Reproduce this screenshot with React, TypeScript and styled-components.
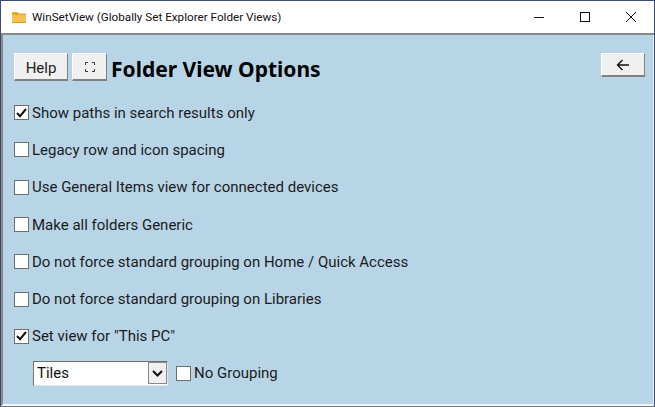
import React from "react";
import styled, { createGlobalStyle } from "styled-components";

const Global = createGlobalStyle`
  html, body { margin: 0; padding: 0; background: #fff; }
  body { font-family: Roboto, "Noto Sans", sans-serif; }
`;
const Win = styled.div`
  width: 655px; height: 407px; box-sizing: border-box; display: flex; flex-direction: column;
  border: 1px solid #3c4a70; border-bottom-color: #7a7a7a; overflow: hidden; background: #fff;
`;
const TitleBar = styled.div`
  height: 32px; flex: none; display: flex; align-items: center; padding-left: 11px;
  background: #fff; border-bottom: 2px solid #8a8a8a;
`;
const Title = styled.span`
  font-size: 11.7px; color: #111; margin-left: 6px; flex: 1; white-space: nowrap;
`;
const WinBtn = styled.div`
  width: 46px; height: 32px; display: flex; align-items: center; justify-content: center;
`;
const Content = styled.div`
  flex: 1; min-height: 0; box-sizing: border-box; background: #b8d5e8;
  border-left: 2px solid #8a8a8a; border-right: 1px solid #f2f6f8; border-bottom: 2px solid #f2f6f8;
  padding: 18px 8px 0 11px; display: flex; flex-direction: column;
`;
const Header = styled.div`
  display: flex; align-items: flex-start; height: 28px; margin-bottom: 13px;
`;
const Btn = styled.button<{ $w: number; $h: number }>`
  width: ${p => p.$w}px; height: ${p => p.$h}px; box-sizing: border-box; padding: 0; margin: 0;
  display: flex; align-items: center; justify-content: center;
  background: #f0f0f0; color: #222; font-family: inherit; font-size: 15px;
  border: none; border-right: 1px solid #808080; border-bottom: 2px solid #808080;
  border-top: 1px solid #fff; border-left: 1px solid #fff;
`;
const HelpBtn = styled(Btn)` margin-right: 4px; padding-top: 2px; `;
const Heading = styled.h1`
  margin: 0 0 0 4px; height: 28px; line-height: 32px; font-size: 21px; font-weight: 700; color: #000; flex: 1; white-space: nowrap; font-family: "Noto Sans", sans-serif;
`;
const Row = styled.label`
  display: flex; align-items: center; height: 37.3px; font-size: 15px; color: #1b1b1b; white-space: nowrap;
`;
const Box = styled.span`
  width: 15px; height: 15px; box-sizing: border-box; flex: none; margin-right: 3px;
  display: flex; align-items: center; justify-content: center;
  background: #fff; border: 1px solid #6e6e6e;
`;
const SubRow = styled.div`
  display: flex; align-items: center; margin-left: 19px; height: 30px; margin-top: 3px;
`;
const SelectBox = styled.div`
  width: 135px; height: 25px; box-sizing: border-box; display: flex; background: #fff;
  border: 1px solid; border-color: #707070 #e4e4e4 #e4e4e4 #707070;
  font-size: 15px; color: #111; align-items: center; padding-left: 3px; justify-content: space-between;
`;
const Arrow = styled.span`
  width: 19px; height: 22px; box-sizing: border-box; display: flex; align-items: center; justify-content: center;
  background: #f0f0f0; border: 1px solid #8a8a8a;
`;
const NoGroup = styled.label`
  display: flex; align-items: center; font-size: 15px; color: #1b1b1b; margin-left: 8px;
`;

const Check = () => (
  <svg width="11" height="10" viewBox="0 0 11 10"><path d="M1 5l3 3.2L10 1" fill="none" stroke="#111" strokeWidth="2" /></svg>
);

const CheckRow = ({ on, children }: { on?: boolean; children: React.ReactNode }) => (
  <Row><Box>{on && <Check />}</Box>{children}</Row>
);

export default function App() {
  return (
    <Win>
      <Global />
      <TitleBar>
        <svg width="14" height="11" viewBox="0 0 14 11">
          <path d="M0 0h5.5l1.5 1.5H14V11H0z" fill="#e8a92e" />
          <path d="M0 3h14v8H0z" fill="#f5c24f" />
          <path d="M0 10h14v1H0z" fill="#d99a25" />
        </svg>
        <Title>WinSetView (Globally Set Explorer Folder Views)</Title>
        <WinBtn><svg width="10" height="10"><path d="M0 5.5h10" stroke="#111" /></svg></WinBtn>
        <WinBtn><svg width="10" height="10"><rect x=".5" y=".5" width="9" height="9" fill="none" stroke="#111" /></svg></WinBtn>
        <WinBtn><svg width="10" height="10"><path d="M0 0l10 10M10 0L0 10" stroke="#111" /></svg></WinBtn>
      </TitleBar>
      <Content>
        <Header>
          <HelpBtn $w={54} $h={28}>Help</HelpBtn>
          <Btn $w={35} $h={28}>
            <svg width="10" height="10" viewBox="0 0 10 10">
              <path d="M.5 3V.5H3M7 .5h2.5V3M9.5 7v2.5H7M3 9.5H.5V7" fill="none" stroke="#333" />
            </svg>
          </Btn>
          <Heading>Folder View Options</Heading>
          <Btn $w={44} $h={24}>
            <svg width="14" height="12" viewBox="0 0 14 12"><path d="M13 6H1.5M6.5 1L1.5 6l5 5" fill="none" stroke="#111" strokeWidth="1.4" /></svg>
          </Btn>
        </Header>
        <CheckRow on>Show paths in search results only</CheckRow>
        <CheckRow>Legacy row and icon spacing</CheckRow>
        <CheckRow>Use General Items view for connected devices</CheckRow>
        <CheckRow>Make all folders Generic</CheckRow>
        <CheckRow>Do not force standard grouping on Home / Quick Access</CheckRow>
        <CheckRow>Do not force standard grouping on Libraries</CheckRow>
        <CheckRow on>Set view for "This PC"</CheckRow>
        <SubRow>
          <SelectBox>Tiles
            <Arrow><svg width="11" height="7" viewBox="0 0 11 7"><path d="M1 1l4.5 4.5L10 1" fill="none" stroke="#111" strokeWidth="2" /></svg></Arrow>
          </SelectBox>
          <NoGroup><Box />No Grouping</NoGroup>
        </SubRow>
      </Content>
    </Win>
  );
}
